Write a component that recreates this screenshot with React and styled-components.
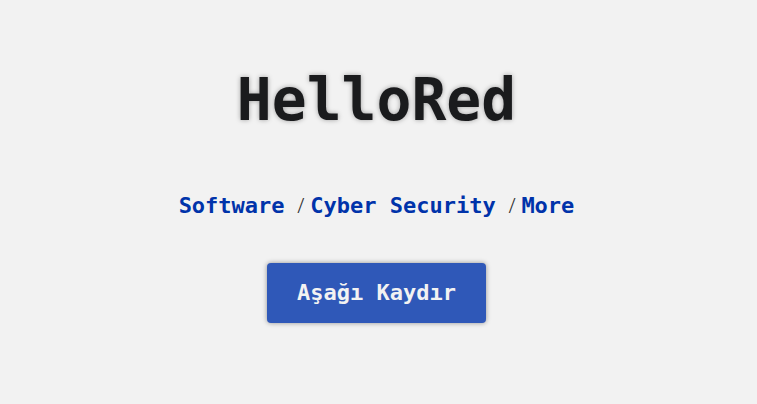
import React from "react";
import styled, { createGlobalStyle } from "styled-components";

const mono = `Consolas, "DejaVu Sans Mono", monospace`;

const GlobalStyle = createGlobalStyle`
  * { box-sizing: border-box; }
  body { margin: 0; background: #f2f2f2; }
`;

const Hero = styled.main`
  display: flex;
  flex-direction: column;
  align-items: center;
  padding: 64px 20px 80px 16px;
  font-family: ${mono};
  font-weight: bold;
`;

const Title = styled.h1`
  margin: 0;
  color: #1a1b1d;
  font-size: 58px;
  line-height: 72px;
  text-shadow: 0 0 5px rgba(0, 0, 0, 0.35);
`;

const Topics = styled.p`
  margin: 55px 0 0;
  display: flex;
  align-items: baseline;
  color: #0033aa;
  font-size: 22px;
  line-height: 28px;
`;

const Slash = styled.span`
  margin: 0 6px 0 13px;
  color: #333;
  font-family: "Liberation Serif", serif;
  font-size: 24px;
  font-weight: normal;
`;

const ScrollButton = styled.button`
  margin: 43px 0 0;
  padding: 16px 30px;
  border: 0;
  border-radius: 4px;
  background: #2f58b8;
  color: #f2f2f2;
  font: inherit;
  font-size: 22px;
  line-height: 28px;
  box-shadow: 0 0 5px rgba(0, 0, 0, 0.4);
  cursor: pointer;
`;

export default function App() {
  return (
    <>
      <GlobalStyle />
      <Hero>
        <Title>HelloRed</Title>
        <Topics>
          <span>Software</span>
          <Slash>/</Slash>
          <span>Cyber Security</span>
          <Slash>/</Slash>
          <span>More</span>
        </Topics>
        <ScrollButton type="button">Aşağı Kaydır</ScrollButton>
      </Hero>
    </>
  );
}
